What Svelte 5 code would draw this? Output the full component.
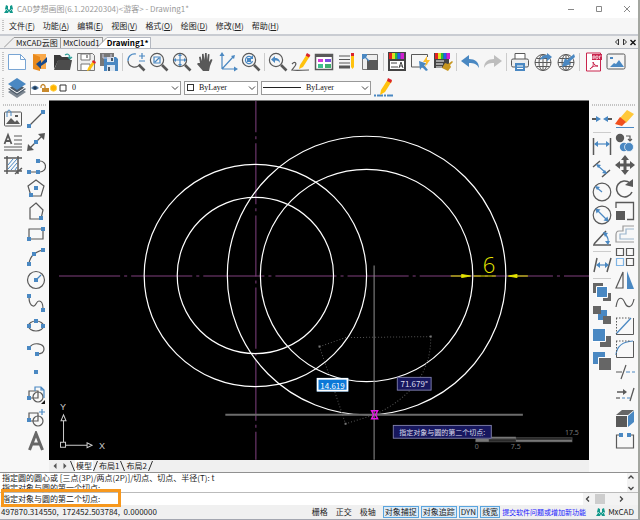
<script>
  const G = "#595959";
  const B = "#4a88c2";

  const lens = (inner) =>
    `<circle cx="8" cy="8" r="6.6" fill="none" stroke="${G}" stroke-width="1.2"/>
     <path d="M13 13l5.5 5.5" stroke="${G}" stroke-width="2.6"/>${inner}`;

  const globe = (inner) =>
    `<g fill="none" stroke="${G}" stroke-width="1"><circle cx="10" cy="10.5" r="8"/>
     <ellipse cx="10" cy="10.5" rx="4" ry="8"/><path d="M10 2.5v16M2 10.5h16M3.5 6.5h13M3.5 14.5h13"/></g>${inner}`;

  const line = (d, color = G, width = 1.2) =>
    `<path d="${d}" fill="none" stroke="${color}" stroke-width="${width}"/>`;
  const fill = (d, color = G) => `<path d="${d}" fill="${color}"/>`;
  const dots = (...points) =>
    points
      .map(([x, y]) => `<rect x="${x - 2}" y="${y - 2}" width="4" height="4" fill="${B}"/>`)
      .join("");

  const pencil =
    fill("M16 2l3 2-7 11-4 2 1-4z", "#ffc20e") + fill("M16 1l3.4 2-1.4 2.4-3.4-2z", "#d9232e");
  const rainbow = `<rect x="2" y="1" width="3" height="6" fill="#e02020"/><rect x="5" y="1" width="3" height="6" fill="#e0e020"/>
    <rect x="8" y="1" width="2.5" height="6" fill="#20c040"/><rect x="10.5" y="1" width="3" height="6" fill="#2060f0"/><rect x="13.5" y="1" width="3.5" height="6" fill="#d020d0"/>`;

  const icons = {
    new: `<path d="M1.5 2.5h12l5 5v10h-17z" fill="#fdfeff" stroke="#78a5d4"/>` + line("M13.5 2.5v5h5", "#78a5d4", 1),
    open: fill("M3 2h13v15H3z", "#f9a94a") + fill("M3 2l7 3v14l-7-2z", "#e98a1d") + fill("M17 5v5l-6 4v3l-5-5 5-4v3z", "#174a8c"),
    folder: fill("M1 3h6l2 2h8v4H5l-4 8z", "#3a3a3a") + fill("M5 8h14l-2 10H1z", "#4c4c4c") + line("M12 3c3-2 5 0 5 3m-2-1l2 2 2-2", "#2f9f98"),
    save: `<path d="M1.5 1.5h15l2 2v15h-17z" fill="#eee" stroke="#777"/><path d="M5 2h9v6H5z" fill="#fff" stroke="#777"/><path d="M5 18v-6h9v6" fill="#fff" stroke="#777"/>` + line("M11 3v3") + fill("M17 9l2 2-5 7-3 1 1-3z", "#ffc20e") + fill("M17 8l3 2-1 2-3-2z", "#d9232e"),
    saveall: fill("M1 1h14v13H1z", "#777") + fill("M5 5h12l2 2v12H5z", B) + fill("M8 5h7v5H8zM8 13h8v6H8z", "#dce6f0") + fill("M12 6h2v3h-2zM9 15h2v4H9z", "#46586c") + line("M4 2v4h8V2", "#ccd", 1),
    zoomdyn:
      `<path d="M10 2a6.5 6.5 0 0 0-8 7" fill="none" stroke="${B}" stroke-width="1.2"/>` +
      line("M2 9a6.5 6.5 0 0 0 12 3") + line("M13 13l5.5 5.5", G, 2.6) + line("M13 4h6M16 1v6M13 9h6", B),
    zoomwin: lens(line("M5 5h6v6H5zM6 10l4-4", B)),
    zoomall: lens(line("M8 3v10M3 8h10", B) + fill("M8 1.5l2 2.5H6zM8 14.5l2-2.5H6zM1.5 8L4 6v4zM14.5 8L12 6v4z", B)),
    pan: fill("M5 11L4 5l1.5-.6L7 9V2l1.6-.3L9.5 8l.5-7h1.700l.3 7 1-6 1.5.3L14 10l2-3 1.5.7L15 14l-1 5H8l-6-7 1-1z"),
    axes: line("M4 17V3M4 17h13M4 17L15 5", B, 1.2) + fill("M4 0l2.5 4h-5zM20 17l-4-2.5v5zM17 3l-1 4-3-3z", B),
    zoomrt: lens(line("M11 6a3.6 3.6 0 1 0 .5 3", B) + fill("M12 3v4H8z", B) + dots([8, 8])),
    zoomprev: lens(fill("M3 7.5L7 4v2c3 0 5 1.5 5 5-1-2-2.5-2.5-5-2.5V11z", B)),
    edit: line("M1 12c3-3 5-1 3 2l-3 4c5 1 10 0 17 0", G, 1.2) + pencil,
    palette:
      `<rect x="1.5" y="2.5" width="17" height="15" fill="#fff" stroke="${G}" stroke-width="1.5"/>` +
      fill("M1 2h18v3H1z") + fill("M4 7h5v3H4z", "#d63bd6") + fill("M11 7h6v3h-6z", "#7a4de0") + fill("M4 12h5v4H4z", "#3fbf8f") + fill("M11 12h6v4h-6z", "#3fae6f"),
    lines: line("M2 4h11M2 7.5h11M2 11h11", G, 1.2) + line("M2 15h11", G, 3) + fill("M14 4h3v11l-1.5 2-1.5-2z", "#ffc20e") + fill("M14 1h3v3h-3z", "#d9232e"),
    scale: `<path d="M2.5 2.5h15v15h-15z" fill="#eee" stroke="#777"/>` + fill("M7 8h11v10H7z") + fill("M2 2h5v2L4 7H2z", B) + line("M4 4l5 5", B),
    style: fill("M1 0h18v19H1z", "#444") + rainbow + fill("M3 9h14v8H3z", "#fff") + line("M4 11h6M4 15h7M12 16l2-6 2 6M12.5 14h3", "#444", 1),
    select: `<path d="M13 15H1.5V2.5h16V5" fill="none" stroke="${G}"/>` + fill("M9 9l9 3-4 1 4 5-2 1-4-4-2 3z", B) + fill("M17 4l-4 6h3l-1 5 5-7h-3z", "#fdbd2c"),
    brush: fill("M1 1h15v15H1z", "#444") + rainbow + line("M3 9h8M3 12h7M3 15h6", "#fff", 1.2) + fill("M19 9l-4 3-3-1-3 5 6 3 3-4-1-2 3-3z", "#c7961f"),
    undo: fill("M1 9l8-6v4c6 0 10 3 10 9-2-4-5-5-10-5v4z", B),
    redo: fill("M19 9l-8-6v4C5 7 1 10 1 16c2-4 5-5 10-5v4z", "#bdbdbd"),
    print: `<path d="M5 7V1.5h10V7" fill="#fff" stroke="${G}"/><rect x="1.5" y="7" width="17" height="8" rx="1.5" fill="#eee" stroke="${G}"/>` + fill("M5 11h10v8H5z", B) + line("M7 14h6M7 16.5h6", "#fff", 1),
    upload: globe(fill("M7 8c1-4 4-5 7-5V1l5 4-5 4V6c-3 0-5 1-7 2z", B)),
    download: globe(fill("M18 2l-7 6-2-2-3 9 9-3-2-2 6-5z", B)),
    pdf:
      `<path d="M3.5 1h14v18h-14z" fill="#fff" stroke="#c9254d"/>` + fill("M9 2h10v6H9z", "#c9254d") + line("M10 7V4h2v2h-2M13 4v3h1l1-1V4zM16.5 7V4h2", "#fff", 0.7) +
      line("M10 10c1 4-1 6-3 7 2-3 5-3 8-3-2 0-4-1-5-4", "#c9254d", 1),
    image: `<rect x="1" y="2" width="18" height="15" rx="1.5" fill="#f4f4f4" stroke="${G}"/>` + fill("M4 15l4-4 2 1 3-4 5 7z", B) + fill("M4 5h3v2H4z", B),
    layers: fill("M10 8l9 6-9 6-9-6z", "#7d8791") + fill("M10 5l9 6-9 6-9-6z", "#4c5a68") + fill("M10 0l9 6-9 6-9-6z", B) + line("M1 9l9 6 9-6", "#fff", 1),
    linestyle: `<path d="M0 17.5h20" stroke="${B}" stroke-width="2" stroke-dasharray="2 1 6 1"/>` + fill("M14 1l4 2-7 11-5 3 1-5z", "#ffc20e") + fill("M14 0l4 2-1 3-4-2z", "#d9232e"),

    picture: `<rect x="1.5" y="3" width="17" height="14" rx="1" fill="#f6f6f6" stroke="${G}"/>` + fill("M3 15l5-6 4 4 2-2 3 4z") + fill("M12 6h3v2h-3z") + line("M4 8V3q2-4 4 0v4", B, 1),
    mtext: line("M11 4h8M11 8h8M11 12h8M1 15h18M1 18h18", G, 1.2) + line("M1.5 12L5 3l3.5 9M3 9h4", G, 1.8),
    hatch: line("M4 1v18M1 3h18M15 1v18M1 16h18M12 19l7-6", G, 1.5) + line("M5 10l5-6M5 14l9-10M8 15l6-7M12 15l2-3", B, 1),
    line: line("M3 17L17 3") + dots([3, 17], [17, 3]),
    xline: line("M3 17L17 3") + fill("M1 19l1-7 6 6zM19 1l-1 7-6-6z") + dots([10, 10]),
    polyline: line("M3 17h9M12 6h2a5.5 5.5 0 0 1 0 11h-2") + dots([3, 17], [12, 17], [12, 6]),
    polygon: line("M10 2l8 6-3 10H5L2 8z") + dots([10, 10], [5, 17]),
    shape: line("M10 2l7 7-2 9-11 0 0-11z") + dots([15, 17]),
    rect: line("M3 5h14v10H3z") + dots([3, 15], [17, 5]),
    arc: line("M3 17Q4 6 17 3") + dots([3, 17], [8, 7], [17, 3]),
    circle: `<circle cx="10" cy="10" r="8.5" fill="none" stroke="${G}" stroke-width="1.2"/>` + line("M10 10l5-5", B) + dots([10, 10]),
    spline: line("M3 4c0 4 1 8 4 9s3-5 6-5 4 4 4 8") + dots([3, 3], [17, 17]),
    ellipse: `<ellipse cx="10" cy="10" rx="7.5" ry="5" fill="none" stroke="${G}" stroke-width="1.2"/>` + dots([3, 10], [17, 10], [10, 5]),
    elarc: line("M4 8c3-5 14-4 14 2 0 4-4 5-7 5") + dots([3, 9], [11, 15]),
    point: dots([10, 10]),
    block: line("M3 6h9v7H3z") + `<circle cx="12" cy="12" r="5" fill="none" stroke="${G}" stroke-width="1.2"/>` + line("M9 6V2h6l3 3v8M15 2v3h3", B) + dots([3, 13]) + fill("M19 15v4h-4z", "#111"),
    insert: line("M3 5h9v8H3z") + `<circle cx="12" cy="13" r="5" fill="none" stroke="${G}" stroke-width="1.2"/>` + line("M16 1v6M13 4h6", B) + dots([3, 12]),
    text: line("M3.5 19L10 2.5 16.5 19M6 13h8", "#686868", 3),

    join: line("M0 10h6M14 10h6", G, 2) + fill("M9 10L4 7v6zM11 10l5-3v6z", B),
    dimlin: line("M1.5 2v17M18.5 2v17", G, 1.5) + line("M3 8h14", B) + fill("M2 8l4-3v6zM18 8l-4-3v6z", B),
    dimalign: line("M1 8l7-6M10 18l8-7", G, 1.5) + line("M5 6l9 8", B) + fill("M4 5l5 1-3 3zM15 15l-5-1 3-3z", B),
    radius: `<circle cx="10" cy="10" r="8.8" fill="none" stroke="${G}" stroke-width="1.2"/>` + line("M10 10L4 5", B) + fill("M3 4l5 1-3 3z", B),
    diameter: `<circle cx="10" cy="10" r="8.8" fill="none" stroke="${G}" stroke-width="1.2"/>` + line("M5 5l10 10", B) + fill("M3.5 3.5l5 1-4 4zM16.5 16.5l-5-1 4-4z", B),
    angle: line("M1 17h18M2 16L14 3", G, 1.5) + line("M13 6q4 4 3 9", B) + fill("M11 4l5 1-3 4zM16 17l-3-4h5z", B),
    oblique: line("M2 17L5 3M15 17l4-14", G, 1.5) + line("M5 10h10", B) + fill("M4 10l4-3v6zM17 10l-4-3v6z", B),
    order1: fill("M1 1h10v10H1zM11 11h8v8h-8z", "#666") + fill("M5 5h10v10H5z", B) + line("M4.5 4.5h11v11h-11z", "#fff", 1),
    order2: fill("M6 5h9v10H6z", B) + fill("M1 1h8v8H1zM11 11h8v8h-8z", "#666"),
    order3: fill("M8 8h11v11H8z", "#666") + fill("M1 1h12v12H1z", B) + line("M0 13.5h13.5V0", "#fff", 1),
    order4: fill("M1 1h12v12H1z", B) + fill("M7 7h12v12H7z", "#666") + line("M6.5 19V6.5H19", "#fff", 1),
    erase: fill("M12 1l7 4-8 9-6-5z", "#ffc83a") + fill("M5 8l6 5-4 4-7-2z", "#f0501e") + line("M1 18.5h18", B, 1),
    copy: `<circle cx="5" cy="6" r="4.2" fill="${G}"/><circle cx="9" cy="15" r="4.2" fill="${B}"/><circle cx="14" cy="15" r="4.5" fill="${B}" stroke="#fff" stroke-width=".7"/>` + line("M11 4h4v5m-2-2l2 2 2-2"),
    move: line("M10 3v14M3 10h14", G, 3) + fill("M10 0l4 5H6zM10 20l4-5H6zM0 10l5-4v8zM20 10l-5-4v8z"),
    rotate: line("M15 5A8 8 0 1 0 17 14", G, 1.5) + fill("M18 1v8l-8-2z"),
    resize: fill("M1 10h9v9H1z") + line("M1 7V1.5h17.5V18.5H12", G, 1.3),
    offset: line("M19 2H8v5H4q-3 0-3 4v7h18", "#999") + line("M19 5h-8v5H5v5h14", "#9bb5cc"),
    array: line("M1.5 1.5h7v7h-7zM11.5 1.5h7v7h-7zM11.5 11.5h7v7h-7z") + line("M1.5 11.5h7v7h-7z", "#7fb4e4"),
    mirror: line("M8 2v16H1z") + fill("M12 1v18h7z", B),
    curve: line("M1 14C3 1 8 5 10 10s7 6 9-4"),
    chamfer: line("M1 18.5h17.5V2", G, 1) + line("M1 18L16 2", B) + `<path d="M1 2h15M1.5 2v16" stroke="${G}" stroke-dasharray="1.5 1.5"/>`,
    fillet: line("M1.5 12v6.5h17V2", G, 1) + line("M1 16Q2 3 18 2", B) + `<path d="M1 2h15M1.5 2v14" stroke="${G}" stroke-dasharray="1.5 1.5"/>`,
    trim: line("M1 10h6M6 17L11 3") + `<path d="M11 10h9" stroke="${B}" stroke-width="1.2" stroke-dasharray="4 2"/>`,
    extend: line("M2 7h8M15 16l4-13", G, 1.3) + fill("M12 7L8 4v6z") + line("M1 13h4") + `<path d="M7 13h8" stroke="${B}" stroke-width="1.2" stroke-dasharray="3 2"/>`,
    box: fill("M1 8h11v11H1z") + fill("M1 7l6-5h12l-6 5z", "#666") + fill("M13 8l6-5v11l-6 5z", B),
    break: line("M5 4H1.5v13h17V4H15", G, 1.2) + dots([6, 4], [14, 4]),
  };

  const menus = [
    ["文件", "F"],
    ["功能", "A"],
    ["编辑", "E"],
    ["视图", "V"],
    ["格式", "O"],
    ["绘图", "D"],
    ["修改", "M"],
    ["帮助", "H"],
  ];

  const mainTools = "new open folder save saveall | zoomdyn zoomwin zoomall pan axes zoomrt | zoomprev edit palette lines scale | style select brush | undo redo | print upload download | pdf image".split(" ");
  const leftTools = "picture mtext hatch".split(" ");
  const drawTools = "line xline polyline polygon shape rect arc circle spline ellipse elarc point block insert text".split(" ");
  const dimTools = "join | dimlin dimalign radius diameter angle | oblique | order1 order2 order3 order4".split(" ");
  const modifyTools = "erase copy move rotate resize offset array mirror curve chamfer fillet trim extend box break".split(" ");

  let modes = $state([
    { label: "栅格", on: false },
    { label: "正交", on: false },
    { label: "极轴", on: false },
    { label: "对象捕捉", on: true },
    { label: "对象追踪", on: true },
    { label: "DYN", on: true },
    { label: "线宽", on: true },
  ]);

  let distance = $state("14.619");
  let command = $state("指定对象与圆的第二个切点:");
</script>

{#snippet tools(names)}
  {#each names as name}
    {#if name === "|"}
      <span class="sep"></span>
    {:else}
      <button class="tool" aria-label={name}>
        <svg viewBox="0 0 20 20">{@html icons[name]}</svg>
      </button>
    {/if}
  {/each}
{/snippet}

{#snippet chevron()}
  <svg class="chevron" viewBox="0 0 8 8"><path d="M1 2.5l3 3 3-3" fill="none" stroke="#444" /></svg>
{/snippet}

{#snippet logo()}
  <svg class="logo" viewBox="0 0 10 10">
    <path d="M1 5l1-4 2 1v3l1 1 1-1V2l2-1 1 4-1 1 1 3H6L5 7 4 9H0l2-3z" fill="#12988a" />
    <path d="M2 5l2 2M8 5L6 7" stroke="#d8f2ee" stroke-width=".7" />
  </svg>
{/snippet}

<div class="window">
  <header class="titlebar">
    {@render logo()}
    <span class="title">CAD梦想画图(6.1.20220304)&lt;游客&gt; - Drawing1*</span>
    <button aria-label="Minimize"><svg viewBox="0 0 8 8"><path d="M1 4.5h6" /></svg></button>
    <button aria-label="Maximize"><svg viewBox="0 0 8 8"><path d="M1.5 1.5h5v5h-5z" /></svg></button>
    <button aria-label="Close"><svg viewBox="0 0 8 8"><path d="M1 1l6 6M7 1L1 7" /></svg></button>
  </header>

  <nav class="menubar">
    <span class="grip"></span>
    {#each menus as [label, key]}
      <button>{label}(<u>{key}</u>)</button>
    {/each}
  </nav>

  <div class="tabs">
    <svg class="slant" viewBox="0 0 10 11"><path d="M0 10.5L10 .5" /></svg>
    <button class="tab">MxCAD云图</button>
    <button class="tab">MxCloud1</button>
    <svg class="slant on" viewBox="0 0 10 11"><path d="M0 11L10 .5V11z" class="face" /><path d="M0 10.5L10 .5" /></svg>
    <button class="tab active">Drawing1*</button>
    <div class="tab-nav">
      <button aria-label="Previous tab"><svg viewBox="0 0 8 8"><path d="M5.5 1v6l-3-3z" fill="none" stroke="#333" /></svg></button>
      <button aria-label="Next tab"><svg viewBox="0 0 8 8"><path d="M2.5 1v6l3-3z" fill="none" stroke="#333" /></svg></button>
      <button aria-label="Close tab"><svg viewBox="0 0 8 8"><path d="M1.5 2l5 5M6.5 2l-5 5" fill="none" stroke="#111" stroke-width="1.4" /></svg></button>
    </div>
  </div>

  <div class="toolbar main-tools">
    <span class="grip"></span>
    {@render tools(mainTools)}
  </div>

  <div class="toolbar layer-tools">
    <span class="grip"></span>
    {@render tools(["layers"])}
    <div class="combo layer">
      <svg class="flags" viewBox="0 0 36 10">
        <path d="M0 5q4-5 8 0-4 4-8 0z" fill="#5b83ad" />
        <circle cx="4" cy="5" r="1.8" fill="#1f3b57" />
        <path d="M10 5V3q2-3 4 0v2" fill="none" stroke="#c4862a" stroke-width="1.3" />
        <path d="M11 5h7v4h-7z" fill="#c98a2c" />
        <circle cx="22.5" cy="5" r="3.2" fill="#ffb300" stroke="#ffd34d" />
        <path d="M29 2h6v6h-6z" fill="#fff" stroke="#333" />
      </svg>
      <select aria-label="Layer"><option>0</option></select>
      {@render chevron()}
    </div>
    <div class="combo color">
      <span class="swatch"></span>
      <select aria-label="Color"><option>ByLayer</option></select>
      {@render chevron()}
    </div>
    <div class="combo linetype">
      <span class="sample"></span>
      <select aria-label="Linetype"><option>ByLayer</option></select>
      {@render chevron()}
    </div>
    {@render tools(["linestyle"])}
  </div>

  <main>
    <aside>
      <span class="grip flat"></span>
      <div class="columns">
        <div class="column">{@render tools(leftTools)}</div>
        <div class="column">{@render tools(drawTools)}</div>
      </div>
    </aside>

    <section class="center">
      <div class="canvas">
        <svg viewBox="0 0 539 358" preserveAspectRatio="xMidYMid meet">
          <g stroke="#80407f" stroke-dasharray="61 4 3 4" fill="none">
            <path d="M10 174.5H539" />
            <path d="M206.5 -30V358" />
          </g>
          <g stroke="#fff" fill="none" stroke-width="1.2">
            <circle cx="206" cy="174" r="111" />
            <circle cx="206" cy="174" r="78" />
            <circle cx="317" cy="174" r="139" />
            <circle cx="317" cy="174" r="106" />
          </g>
          <g stroke="#555" stroke-dasharray="1 2" fill="none">
            <path d="M270 245l26-9 85-1M270 245l26 77 29-9Q382 286 381 235" />
          </g>
          <path d="M269 244h2v2h-2zM380 234h2v2h-2zM295 321h2v2h-2z" fill="#777" />
          <path d="M324.5 164V358" stroke="#909090" />
          <path d="M176 313H473" stroke="#6c6c6c" stroke-width="2" />
          <path d="M322 309h6l-2 4 2 4h-6l2-4z" fill="none" stroke="#e619e6" stroke-width="1.5" />

          <g stroke="#e6e600" fill="#e6e600">
            <path d="M401 174.5h11M424 174.5h22M467 174.5h11" />
            <path d="M412 173v3l9-1.5zM467 173v3l-9-1.5z" />
          </g>
          <text class="dim" x="433" y="172">6</text>

          <g stroke="#ccc" fill="none">
            <path d="M11.5 340.5h5v5h-5zM14.5 340V319M17 343.5h21" />
            <path d="M12 319h5l-2.5-6zM38 341v5l5-2.5z" />
          </g>
          <text class="axis" x="11" y="308">Y</text>
          <text class="axis" x="50" y="347">X</text>

          <path d="M426 338h40v-2h56v4h-96z" fill="#222" stroke="#444" />
          <path d="M426 337h13v3h-13zM466 338h56v2h-56zM439 335h27v2h-27z" fill="#777" />
          <text class="scale" x="425" y="347">0</text>
          <text class="scale" x="461" y="347">7.5</text>
          <text class="scale" x="515" y="333">17.5</text>

          <foreignObject x="267" y="276" width="32" height="14">
            <input class="dyn" aria-label="Distance" bind:value={distance} />
          </foreignObject>
          <foreignObject x="347" y="275" width="35" height="14">
            <div class="tip">71.679°</div>
          </foreignObject>
          <foreignObject x="343" y="323" width="99" height="14">
            <div class="tip prompt">指定对象与圆的第二个切点:</div>
          </foreignObject>
        </svg>
      </div>
      <div class="layouts">
        <button aria-label="Scroll left"><svg viewBox="0 0 8 8"><path d="M5.5 1v6l-3-3z" fill="#555" /></svg></button>
        <button aria-label="Scroll right"><svg viewBox="0 0 8 8"><path d="M2.5 1v6l3-3z" fill="#555" /></svg></button>
        <svg class="edge" viewBox="0 0 5 10"><path d="M.5 0l4 10" /></svg>
        <button class="layout current">模型</button>
        <svg class="edge" viewBox="0 0 5 10"><path d="M4.5 0l-4 10" /></svg>
        <button class="layout">布局1</button>
        <svg class="edge" viewBox="0 0 5 10"><path d="M.5 0l4 10" /></svg>
        <button class="layout">布局2</button>
        <svg class="edge" viewBox="0 0 5 10"><path d="M4.5 0l-4 10" /></svg>
      </div>
    </section>

    <aside>
      <span class="grip flat"></span>
      <div class="columns">
        <div class="column">{@render tools(dimTools)}</div>
        <div class="column">{@render tools(modifyTools)}</div>
      </div>
    </aside>
  </main>

  <section class="console">
    <div class="history">
      <div class="log">
        <p>指定圆的圆心或 [三点(3P)/两点(2P)]/切点、切点、半径(T): t</p>
        <p>指定对象与圆的第一个切点:</p>
      </div>
      <div class="vscroll">
        <svg viewBox="0 0 8 8"><path d="M1.5 5.5L4 3l2.5 2.5" /></svg>
        <svg viewBox="0 0 8 8"><path d="M1.5 3L4 5.5 6.5 3" /></svg>
      </div>
    </div>
    <div class="entry">
      <input aria-label="Command" bind:value={command} />
      <div class="hscroll">
        <svg viewBox="0 0 8 8"><path d="M5 1.5L2.5 4 5 6.5" /></svg>
        <span class="thumb"></span>
        <svg viewBox="0 0 8 8"><path d="M3 1.5L5.5 4 3 6.5" /></svg>
      </div>
      <span class="highlight"></span>
    </div>
  </section>

  <footer>
    <span class="coords">497870.314550,&nbsp; 172452.503784,&nbsp; 0.000000</span>
    {#each modes as mode}
      <button class="mode" class:on={mode.on} onclick={() => (mode.on = !mode.on)}>{mode.label}</button>
    {/each}
    <a href="#feedback">提交软件问题或增加新功能</a>
    <span class="brand">{@render logo()}MxCAD</span>
  </footer>
</div>

<style>
  :global(body) {
    margin: 0;
  }

  .window {
    display: flex;
    flex-direction: column;
    min-height: 100vh;
    box-sizing: border-box;
    border-right: 2px solid #a3a6a0;
    border-bottom: 1px solid #a3a6b0;
    background: #f6f6f6;
    color: #222;
    font: 8px/12px "Noto Sans CJK SC", "Noto Sans", sans-serif;
  }

  button {
    display: flex;
    align-items: center;
    justify-content: center;
    padding: 0;
    border: 0;
    background: none;
    color: inherit;
    font: inherit;
    white-space: nowrap;
  }

  svg {
    display: block;
    flex: none;
  }

  .grip {
    width: 2px;
    height: 20px;
    margin: 0 2px;
    background: repeating-linear-gradient(#c4c4c4 0 1px, transparent 1px 2px);
  }

  .grip.flat {
    width: auto;
    height: 2px;
    margin: 0 3px;
    background: repeating-linear-gradient(90deg, #c4c4c4 0 1px, transparent 1px 2px);
  }

  .titlebar {
    display: flex;
    align-items: center;
    height: 18px;
    padding: 0 7px 0 4px;
    background: #fff;
    color: #999;
  }

  .logo {
    width: 10px;
    height: 10px;
  }

  .title {
    flex: 1;
    margin-left: 3px;
  }

  .titlebar button {
    margin-left: 20px;
  }

  .titlebar button svg {
    width: 8px;
    height: 8px;
    fill: none;
    stroke: #888;
  }

  .menubar {
    display: flex;
    align-items: center;
    gap: 8px;
    height: 16px;
    border-bottom: 2px solid #c9ccd2;
  }

  .menubar .grip {
    height: 12px;
    margin-right: -3px;
  }

  .tabs {
    display: flex;
    align-items: flex-end;
    height: 12px;
    padding-left: 4px;
    border-bottom: 1px solid #b4b8c0;
    background: #efefef;
  }

  .slant {
    width: 10px;
    height: 11px;
    fill: none;
    stroke: #999;
  }

  .slant.on {
    margin-left: -6px;
  }

  .face {
    fill: #fff;
    stroke: none;
  }

  .tab {
    height: 11px;
    box-sizing: border-box;
    padding: 0 2px;
    border-top: 1px solid #999;
    border-right: 1px solid #999;
  }

  .tab.active {
    padding: 0 2px 0 0;
    border-color: #b4b8c0;
    background: #fff;
    color: #000;
    font-weight: bold;
  }

  .tab-nav {
    display: flex;
    align-self: center;
    margin-left: auto;
    padding-right: 1px;
  }

  .tab-nav svg,
  .layouts button svg {
    width: 8px;
    height: 8px;
  }

  .toolbar {
    display: flex;
    align-items: center;
    gap: 3px;
  }

  .toolbar .grip {
    margin: 0 0 0 2px;
  }

  .main-tools {
    height: 26px;
  }

  .layer-tools {
    height: 25px;
  }

  .tool {
    flex: none;
    width: 20px;
    height: 20px;
  }

  .tool svg {
    width: 20px;
    height: 20px;
  }

  .sep {
    width: 1px;
    height: 18px;
    background: #ccc;
  }

  .column .sep {
    width: 18px;
    height: 1px;
  }

  .combo {
    display: flex;
    align-items: center;
    height: 14px;
    box-sizing: border-box;
    border: 1px solid #999;
    background: #fff;
  }

  .layer {
    width: 151px;
  }

  .color {
    width: 74px;
  }

  .linetype {
    width: 110px;
  }

  .combo select {
    flex: 1;
    min-width: 0;
    margin-right: -10px;
    padding: 0 5px;
    border: 0;
    appearance: none;
    background: none;
    color: #111;
    font: 8px/12px "Liberation Serif", serif;
  }

  .flags {
    width: 36px;
    height: 10px;
  }

  .chevron {
    width: 8px;
    height: 8px;
    margin-right: 1px;
    pointer-events: none;
  }

  .swatch {
    width: 5px;
    height: 5px;
    margin-left: 2px;
    border: 1px solid #333;
  }

  .sample {
    width: 38px;
    height: 1px;
    margin-left: 1px;
    background: #222;
  }

  main {
    display: flex;
    flex: 1;
  }

  aside {
    display: flex;
    flex: none;
    flex-direction: column;
    width: 49px;
    box-sizing: border-box;
    padding-top: 4px;
    background: #f8f8f8;
  }

  .columns {
    display: flex;
    justify-content: center;
    gap: 3px;
    padding-top: 3px;
  }

  .column {
    display: flex;
    flex-direction: column;
    align-items: center;
    gap: 3px;
  }

  .center {
    display: flex;
    flex: 1;
    flex-direction: column;
    min-width: 0;
  }

  .canvas {
    display: flex;
    flex: 1;
    border-top: 1px solid #777;
    background: #000;
  }

  .canvas svg {
    width: 100%;
    height: 100%;
  }

  .dim {
    fill: #e6e600;
    font: 300 22px "Open Sans", sans-serif;
  }

  .axis {
    fill: #ccc;
    font: 9px "Liberation Sans", sans-serif;
  }

  .scale {
    fill: #777;
    font: 7px "Noto Sans", sans-serif;
  }

  .dyn {
    display: block;
    width: 100%;
    height: 14px;
    box-sizing: border-box;
    padding: 0;
    border: 2px solid #fff;
    background: #0b78d7;
    color: #fff;
    font: 8px/10px "Noto Sans CJK SC", sans-serif;
    text-align: center;
  }

  .tip {
    height: 14px;
    box-sizing: border-box;
    border: 1px solid #8c8cab;
    background: #17175e;
    color: #dcdcec;
    font: 8px/12px "Noto Sans CJK SC", sans-serif;
    text-align: center;
    white-space: nowrap;
  }

  .tip.prompt {
    font-size: 7px;
  }

  .layouts {
    display: flex;
    align-items: stretch;
    height: 12px;
    padding-left: 1px;
    background: #f0f0f0;
  }

  .edge {
    width: 5px;
    height: 12px;
    fill: none;
    stroke: #333;
  }

  .layouts button {
    min-width: 10px;
  }

  .layouts .layout {
    padding: 0 1px;
  }

  .layouts .current {
    background: #fff;
  }

  .console {
    border-top: 1px solid #909090;
    background: #fff;
  }

  .history {
    display: flex;
    height: 19px;
    border-bottom: 1px solid #bbb;
  }

  .log {
    flex: 1;
    padding-left: 2px;
    line-height: 10px;
  }

  .log p {
    margin: 0;
  }

  .vscroll {
    display: flex;
    flex-direction: column;
    justify-content: space-between;
    width: 11px;
    background: #f3f3f3;
  }

  .vscroll svg,
  .hscroll svg {
    width: 8px;
    height: 8px;
    fill: none;
    stroke: #444;
    stroke-width: 1.3;
  }

  .entry {
    position: relative;
    display: flex;
    height: 12px;
  }

  .entry input {
    flex: 1;
    min-width: 0;
    padding: 0 0 0 2px;
    border: 0;
    outline: 0;
    background: none;
    color: #222;
    font: inherit;
  }

  .hscroll {
    display: flex;
    align-items: center;
    gap: 3px;
    width: 54px;
    padding-left: 1px;
    background: #f3f3f3;
  }

  .thumb {
    width: 10px;
    height: 10px;
    margin-right: 9px;
    background: #cdcdcd;
  }

  .highlight {
    position: absolute;
    top: -4px;
    left: 1px;
    width: 114px;
    height: 12px;
    border: 3px solid #f7981d;
    pointer-events: none;
  }

  footer {
    display: flex;
    align-items: center;
    gap: 2px;
    height: 14px;
    padding: 0 4px 0 1px;
    background: #f0f0f0;
    white-space: nowrap;
  }

  .coords {
    flex: 1;
  }

  .mode {
    height: 12px;
    box-sizing: border-box;
    margin-right: 4px;
    padding: 0 1px;
  }

  .mode.on {
    margin-right: 0;
    border: 1px solid #5aa5df;
    background: #dcebf7;
  }

  footer a {
    margin-right: 8px;
    color: #1a1aff;
    font-size: 7px;
    text-decoration: none;
  }

  .brand {
    display: flex;
    align-items: center;
    gap: 2px;
  }
</style>
